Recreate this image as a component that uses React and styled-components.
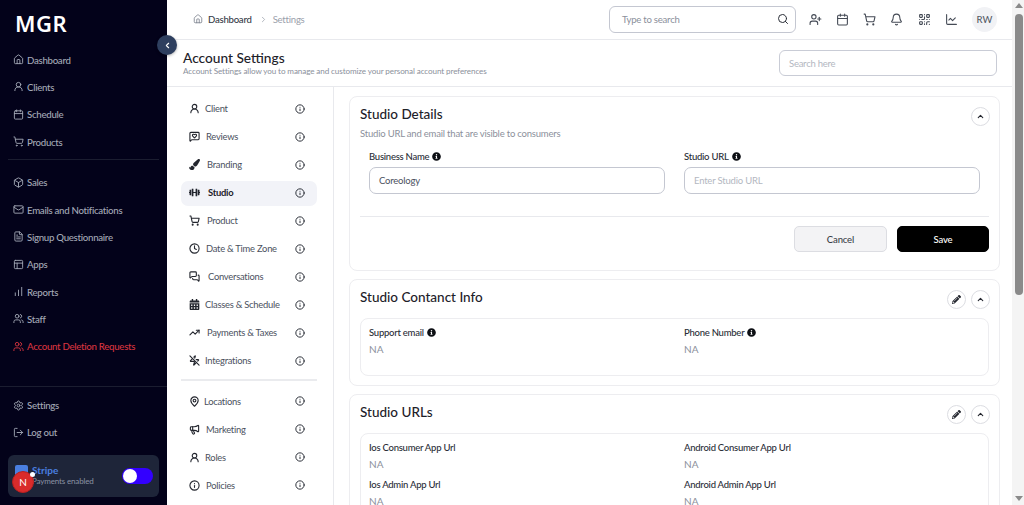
import React from "react";
import styled, { createGlobalStyle } from "styled-components";
import {
  Home, UserRound, Calendar, ShoppingCart, Box, Mail, FileText, PanelsTopLeft, ChartNoAxesColumnIncreasing, Users, Settings, LogOut,
  ChevronLeft, ChevronRight, ChevronUp, Search, UserPlus, Bell, QrCode, LineChart, Info, Clock, MessagesSquare,
  TrendingUp, MapPin, Megaphone, ZapOff, MessageSquareHeart
} from "lucide-react";
import { FaDumbbell, FaPaintBrush, FaCalendarAlt, FaPencilAlt, FaInfoCircle } from "react-icons/fa";

const FONT = `Lato, "Open Sans", sans-serif`;

const Global = createGlobalStyle`
  html, body { margin: 0; padding: 0; height: 100%; overflow: hidden; background: #fff; font-family: ${FONT}; }
  * { box-sizing: border-box; }
`;

const Page = styled.div`display: flex; height: 100vh; overflow: hidden; position: relative;`;

const Sidebar = styled.aside`
  width: 167px; flex: none; background: #03021a; display: flex; flex-direction: column; height: 100%;
`;
const Logo = styled.div`
  height: 46px; padding: 9px 0 0 15px; color: #fff; font: 600 22px/28px "Noto Sans", sans-serif; letter-spacing: 0.6px;
`;
const NavGroup = styled.nav`display: flex; flex-direction: column;`;
const NavItem = styled.div`
  display: flex; align-items: center; gap: 3px; height: 27.3px; padding-left: 13px;
  color: ${p => (p.$danger ? "#d8343f" : "#a3a9b6")}; font-size: 9.7px; letter-spacing: -0.3px; font-weight: 500; white-space: nowrap;
  svg { width: 11px; height: 11px; flex: none; }
`;
const SideDivider = styled.div`height: 1px; background: #1b1d30; margin: 4px 8px 8.5px;`;
const SideSpacer = styled.div`flex: 1;`;
const SideFooterLine = styled.div`height: 1px; background: #1b1d30; margin-bottom: 4px;`;
const PayCard = styled.div`
  position: relative; margin: 9px 8px 8px; height: 42px; background: #1e2539; border-radius: 6px;
  display: flex; align-items: center; justify-content: space-between; padding: 0 6px 0 24px;
`;
const PayText = styled.div`display: flex; flex-direction: column; line-height: 11px;`;
const PayTitle = styled.span`color: #4a7fe0; font-size: 10px; font-weight: 700;`;
const PaySub = styled.span`color: #8b92a3; font-size: 8px; letter-spacing: -0.15px; white-space: nowrap;`;
const StripeMark = styled.div`position: absolute; left: 7px; top: 10px; width: 13px; height: 12px; border-radius: 2px; background: #4a7fe0;`;
const Badge = styled.div`
  position: absolute; left: 4px; top: 16px; width: 22px; height: 22px; border-radius: 50%;
  background: #d92b2b; border: 1.5px solid #b82020; color: #fff; font-size: 10px;
  display: flex; align-items: center; justify-content: center;
`;
const BadgeDot = styled.div`position: absolute; left: 22px; top: 17px; width: 5px; height: 5px; border-radius: 50%; background: #fff;`;
const Toggle = styled.div`
  width: 31px; height: 16px; border-radius: 8px; background: #3300ff; padding: 1px; display: flex; align-items: center;
  &::before { content: ""; width: 14px; height: 14px; border-radius: 50%; background: #fff; }
`;
const Collapse = styled.div`
  position: absolute; left: 157px; top: 35px; width: 20px; height: 20px; border-radius: 50%; background: #2e3f5f; color: #fff;
  display: flex; align-items: center; justify-content: center; box-shadow: 0 1px 3px rgba(0,0,0,.3); z-index: 3;
  svg { width: 9px; height: 9px; }
`;

const Main = styled.main`flex: 1; min-width: 0; display: flex; flex-direction: column; height: 100%; overflow: hidden;`;
const Topbar = styled.header`
  height: 40px; flex: none; border-bottom: 1px solid #e8e9ed; display: flex; align-items: center; padding: 0 15px 1px 26px;
`;
const Crumbs = styled.div`
  display: flex; align-items: center; font-size: 9.6px; letter-spacing: -0.25px; color: #9aa0ab; flex: 1;
  svg { width: 10px; height: 10px; }
`;
const CrumbHome = styled.span`display: flex; color: #7a808c; margin-right: 5px;`;
const CrumbStrong = styled.span`color: #343a46; font-weight: 500;`;
const CrumbSep = styled.span`display: flex; margin: 0 5px 0 7px; color: #9aa0ab; svg { width: 9px; height: 9px; }`;
const TopSearch = styled.div`
  width: 187px; height: 27px; border: 1px solid #c4c7d1; border-radius: 6px; display: flex; align-items: center; justify-content: space-between;
  padding: 0 6px 0 12px; color: #8b909b; font-size: 9.6px; letter-spacing: -0.25px; margin-right: 13px;
  svg { width: 12px; height: 12px; color: #2b2f38; }
`;
const TopIcons = styled.div`
  display: flex; align-items: center; gap: 14.2px;
  svg { width: 13px; height: 13px; color: #444a55; flex: none; }
`;
const Avatar = styled.div`
  width: 25px; height: 25px; border-radius: 50%; background: #f1f2f5; color: #555b66; font-size: 9.5px; font-weight: 500;
  display: flex; align-items: center; justify-content: center;
`;
const PageHead = styled.div`
  height: 47px; flex: none; border-bottom: 1px solid #e8e9ed; display: flex; align-items: center; justify-content: space-between; padding: 0 15px 0 16px;
`;
const HeadText = styled.div`display: flex; flex-direction: column; padding-top: 1px;`;
const HeadTitle = styled.h1`margin: 0; font-size: 13.7px; font-weight: 500; color: #1d2129; line-height: 16px;`;
const HeadSub = styled.p`margin: 0; font-size: 8.1px; letter-spacing: -0.1px; color: #8b909b; line-height: 11px;`;
const HeadSearch = styled.div`
  width: 218px; height: 26px; border: 1px solid #c9ccd6; border-radius: 6px; display: flex; align-items: center; padding: 0 9px; color: #b3b7c1; font-size: 9.5px; letter-spacing: -0.25px;
`;
const Body = styled.div`flex: 1; min-height: 0; display: flex; overflow: hidden;`;
const SettingsNav = styled.nav`
  width: 167px; flex: none; border-right: 1px solid #e8e9ed; padding: 7.5px 16px 0 14px; display: flex; flex-direction: column;
`;
const SetItem = styled.div`
  height: 28px; flex: none; display: flex; align-items: center; justify-content: space-between; padding: 0 12px 0 8px; position: relative;
  color: ${p => (p.$active ? "#1d2129" : "#4b5160")};
  font-size: 9.4px; letter-spacing: -0.25px; font-weight: ${p => (p.$active ? 700 : 400)};
  &::before { content: ""; position: absolute; inset: 2px 0 1px; border-radius: 7px; background: ${p => (p.$active ? "#f2f3f8" : "transparent")}; z-index: 0; }
  > * { position: relative; z-index: 1; }
`;
const SetLabel = styled.span`
  display: flex; align-items: center; gap: ${p => p.$gap}px; white-space: nowrap;
  svg { width: 11px; height: 11px; color: #23262e; flex: none; }
`;
const InfoMark = styled.span`display: flex; color: #2e323b; svg { width: 10px; height: 10px; stroke-width: 2.4; }`;
const SetDivider = styled.div`height: 2px; background: #eaebee; margin: 4px 0 6.5px; flex: none;`;

const Cards = styled.div`flex: 1; min-width: 0; padding: 9px 12px 0 15px; display: flex; flex-direction: column; gap: 8px;`;
const Card = styled.section`
  flex: none; border: 1px solid #ededf0; border-radius: 8px; padding: 0 10px; height: ${p => p.$h}px;
`;
const CardHead = styled.div`
  display: flex; align-items: center; justify-content: space-between;
  height: ${p => p.$h || 38}px; padding: ${p => p.$pt || 0}px 0 ${p => p.$pb || 0}px;
`;
const CardTitle = styled.h2`margin: 0; font-size: 13.5px; font-weight: 500; color: #1d2129;`;
const CardSub = styled.p`margin: 0 0 10px; font-size: 9.5px; letter-spacing: -0.2px; line-height: 13px; color: #8b909b;`;
const CardTools = styled.div`display: flex; gap: 5px; margin: 4px -1px 0 0;`;
const RoundBtn = styled.button`
  width: 19px; height: 19px; border-radius: 50%; border: 1px solid #dcdde2; background: #fff; padding: 0; color: #23262e;
  display: flex; align-items: center; justify-content: center; svg { width: 9px; height: 9px; }
`;
const FormGrid = styled.div`display: grid; grid-template-columns: 296px 296px; column-gap: 19px; padding: 0 9px;`;
const Field = styled.div`display: flex; flex-direction: column; gap: 4px;`;
const Label = styled.label`
  display: flex; align-items: center; gap: 3px; font-size: 9.5px; letter-spacing: -0.25px; font-weight: 500; color: #2a2e37; line-height: 13px;
  svg { width: 9px; height: 9px; color: #0d0f14; }
`;
const Input = styled.div`
  height: 27px; border: 1px solid #c4c7d1; border-radius: 7px; padding: 0 9px 1px; display: flex; align-items: center; font-size: 9.5px; letter-spacing: -0.2px;
  color: ${p => (p.$ph ? "#b3b7c1" : "#4b5160")};
`;
const Rule = styled.div`height: 1px; background: #e8e9ed; margin-top: 22px;`;
const Actions = styled.div`display: flex; justify-content: flex-end; gap: 10px; padding-top: 9px;`;
const Btn = styled.button`
  height: 26px; width: ${p => (p.$dark ? 92 : 93)}px; border-radius: 5px; font: 500 9.5px ${FONT}; letter-spacing: -0.15px;
  background: ${p => (p.$dark ? "#000" : "#f3f3f5")}; color: ${p => (p.$dark ? "#fff" : "#3a3e47")};
  border: 1px solid ${p => (p.$dark ? "#000" : "#dcdde2")};
`;
const Inner = styled.div`
  border: 1px solid #ededf0; border-radius: 8px; padding: 7px 8px 0; display: grid; grid-template-columns: 315px 1fr; row-gap: 7px;
  align-content: start; height: ${p => p.$h}px;
`;
const Info2 = styled.div`display: flex; flex-direction: column; gap: 3px;`;
const Value = styled.span`font-size: 10px; line-height: 14px; color: #8b909b;`;

const ScrollRail = styled.div`
  width: 12px; flex: none; background: #f4f4f4; display: flex; flex-direction: column; align-items: center; height: 100%; padding: 3px 0 4px 2px;
`;
const Arrow = styled.div`
  width: 0; height: 0; border-left: 4px solid transparent; border-right: 4px solid transparent;
  ${p => (p.$down ? "border-top: 5px solid #8a8a8a;" : "border-bottom: 5px solid #8a8a8a;")} flex: none;
`;
const Thumb = styled.div`width: 8px; height: 281px; margin-top: 6px; border-radius: 4px; background: #8a8a8a; flex: none;`;
const RailFill = styled.div`flex: 1;`;

const nav1 = [[Home, "Dashboard"], [UserRound, "Clients"], [Calendar, "Schedule"], [ShoppingCart, "Products"]];
const nav2 = [[Box, "Sales"], [Mail, "Emails and Notifications"], [FileText, "Signup Questionnaire"], [PanelsTopLeft, "Apps"], [ChartNoAxesColumnIncreasing, "Reports"], [Users, "Staff"]];
const set1 = [
  [UserRound, "Client", 5], [MessageSquareHeart, "Reviews", 6], [FaPaintBrush, "Branding", 7], [FaDumbbell, "Studio", 8],
  [ShoppingCart, "Product", 7], [Clock, "Date & Time Zone", 6], [MessagesSquare, "Conversations", 8],
  [FaCalendarAlt, "Classes & Schedule", 5], [TrendingUp, "Payments & Taxes", 7], [ZapOff, "Integrations", 5],
];
const set2 = [[MapPin, "Locations", 4], [Megaphone, "Marketing", 6], [UserRound, "Roles", 5], [Info, "Policies", 6]];

const SetRow = ({ icon: I, text, gap, active }) => (
  <SetItem $active={active}>
    <SetLabel $gap={gap}><I strokeWidth={2.4} />{text}</SetLabel>
    <InfoMark><Info /></InfoMark>
  </SetItem>
);
const Tools = ({ edit }) => (
  <CardTools>
    {edit && <RoundBtn><FaPencilAlt /></RoundBtn>}
    <RoundBtn><ChevronUp strokeWidth={3} /></RoundBtn>
  </CardTools>
);
const Pair = ({ label, info }) => (
  <Info2>
    <Label>{label}{info && <FaInfoCircle />}</Label>
    <Value>NA</Value>
  </Info2>
);

export default function App() {
  return (
    <Page>
      <Global />
      <Sidebar>
        <Logo>MGR</Logo>
        <NavGroup>{nav1.map(([I, t]) => <NavItem key={t}><I />{t}</NavItem>)}</NavGroup>
        <SideDivider />
        <NavGroup>
          {nav2.map(([I, t]) => <NavItem key={t}><I />{t}</NavItem>)}
          <NavItem $danger><Users />Account Deletion Requests</NavItem>
        </NavGroup>
        <SideSpacer />
        <SideFooterLine />
        <NavGroup>
          <NavItem><Settings />Settings</NavItem>
          <NavItem><LogOut />Log out</NavItem>
        </NavGroup>
        <PayCard>
          <StripeMark />
          <PayText><PayTitle>Stripe</PayTitle><PaySub>Payments enabled</PaySub></PayText>
          <Toggle />
          <Badge>N</Badge>
          <BadgeDot />
        </PayCard>
      </Sidebar>
      <Collapse><ChevronLeft strokeWidth={3} /></Collapse>
      <Main>
        <Topbar>
          <Crumbs>
            <CrumbHome><Home /></CrumbHome>
            <CrumbStrong>Dashboard</CrumbStrong>
            <CrumbSep><ChevronRight /></CrumbSep>
            Settings
          </Crumbs>
          <TopSearch>Type to search<Search /></TopSearch>
          <TopIcons>
            <UserPlus /><Calendar /><ShoppingCart /><Bell /><QrCode /><LineChart />
            <Avatar>RW</Avatar>
          </TopIcons>
        </Topbar>
        <PageHead>
          <HeadText>
            <HeadTitle>Account Settings</HeadTitle>
            <HeadSub>Account Settings allow you to manage and customize your personal account preferences</HeadSub>
          </HeadText>
          <HeadSearch>Search here</HeadSearch>
        </PageHead>
        <Body>
          <SettingsNav>
            {set1.map(([I, t, g]) => <SetRow key={t} icon={I} text={t} gap={g} active={t === "Studio"} />)}
            <SetDivider />
            {set2.map(([I, t, g]) => <SetRow key={t} icon={I} text={t} gap={g} />)}
          </SettingsNav>
          <Cards>
            <Card $h={175}>
              <CardHead $h={30} $pt={4}><CardTitle>Studio Details</CardTitle><Tools /></CardHead>
              <CardSub>Studio URL and email that are visible to consumers</CardSub>
              <FormGrid>
                <Field><Label>Business Name <FaInfoCircle /></Label><Input>Coreology</Input></Field>
                <Field><Label>Studio URL <FaInfoCircle /></Label><Input $ph>Enter Studio URL</Input></Field>
              </FormGrid>
              <Rule />
              <Actions><Btn>Cancel</Btn><Btn $dark>Save</Btn></Actions>
            </Card>
            <Card $h={107}>
              <CardHead $pb={4}><CardTitle>Studio Contanct Info</CardTitle><Tools edit /></CardHead>
              <Inner $h={58}>
                <Pair label="Support email" info />
                <Pair label="Phone Number" info />
              </Inner>
            </Card>
            <Card $h={140}>
              <CardHead $pb={4}><CardTitle>Studio URLs</CardTitle><Tools edit /></CardHead>
              <Inner $h={120}>
                <Pair label="Ios Consumer App Url" />
                <Pair label="Android Consumer App Url" />
                <Pair label="Ios Admin App Url" />
                <Pair label="Android Admin App Url" />
              </Inner>
            </Card>
          </Cards>
        </Body>
      </Main>
      <ScrollRail>
        <Arrow />
        <Thumb />
        <RailFill />
        <Arrow $down />
      </ScrollRail>
    </Page>
  );
}
